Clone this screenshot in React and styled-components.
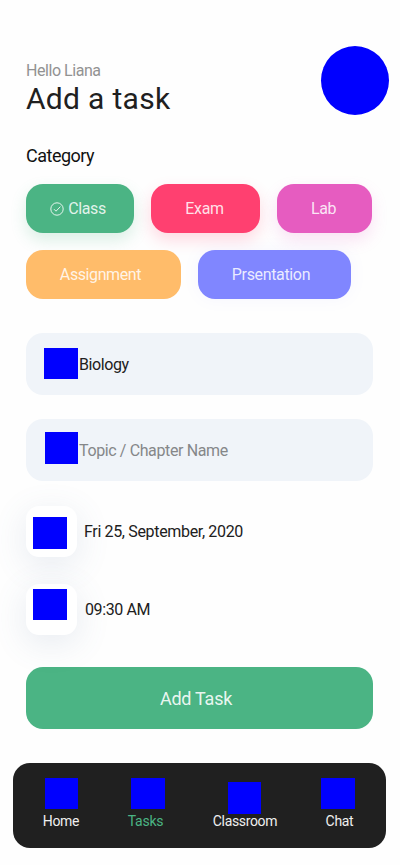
import React from "react";
import styled, { createGlobalStyle } from "styled-components";

const GlobalStyle = createGlobalStyle`
  * { box-sizing: border-box; }
  body {
    margin: 0;
    background: #fefefe;
    font-family: Roboto, "Liberation Sans", sans-serif;
    color: #202020;
  }
  h1, h2, p { margin: 0; font-weight: 400; }
  button { border: 0; padding: 0; font: inherit; }
`;

const Screen = styled.main`
  width: 400px;
  height: 865px;
  padding: 46px 0 0 26px;
  overflow: hidden;
`;

const Header = styled.header`
  display: flex;
  justify-content: space-between;
  width: 363px;
  height: 69px;
`;

const Heading = styled.div`
  padding-top: 16px;
`;

const Greeting = styled.p`
  font-size: 16px;
  line-height: 18px;
  letter-spacing: -0.45px;
  color: #929292;
`;

const Title = styled.h1`
  font-size: 30px;
  line-height: 38px;
  letter-spacing: 0.3px;
`;

const Avatar = styled.div`
  width: 68px;
  height: 69px;
  border-radius: 50%;
  background: #0000ff;
`;

const SectionTitle = styled.h2`
  margin-top: 30px;
  height: 39px;
  font-size: 18px;
  line-height: 22px;
  letter-spacing: -0.5px;
  color: #111;
`;

const Chips = styled.div`
  display: flex;
  flex-wrap: wrap;
  gap: 17px;
  width: 348px;
`;

const Chip = styled.button`
  display: flex;
  align-items: center;
  justify-content: center;
  gap: 4px;
  width: ${(p) => p.$width}px;
  height: 49px;
  padding-right: ${(p) => p.$trim}px;
  border-radius: 17px;
  background: ${(p) => p.$color};
  box-shadow: ${(p) => p.$shadow};
  color: rgba(255, 255, 255, 0.85);
  font-size: 16px;
  letter-spacing: ${(p) => p.$spacing}px;
`;

const Fields = styled.div`
  display: flex;
  flex-direction: column;
  gap: 24px;
  margin-top: 34px;
`;

const Field = styled.div`
  display: flex;
  align-items: flex-start;
  width: 347px;
  height: 62px;
  padding-left: ${(p) => p.$inset}px;
  border-radius: 17px;
  background: #f0f4f9;
`;

const Square = styled.span`
  flex: none;
  width: ${(p) => p.$width || 34}px;
  height: ${(p) => p.$height || 31}px;
  margin-top: ${(p) => p.$top || 0}px;
  background: #0000ff;
`;

const FieldText = styled.span`
  margin-left: 1px;
  line-height: 64px;
  font-size: 16px;
  letter-spacing: ${(p) => p.$spacing}px;
  color: ${(p) => p.$color};
`;

const Schedule = styled.div`
  display: flex;
  flex-direction: column;
  gap: 27px;
  margin-top: 25px;
`;

const ScheduleRow = styled.div`
  display: flex;
  height: 51px;
`;

const Tile = styled.div`
  display: flex;
  align-items: flex-start;
  width: 51px;
  height: 51px;
  padding-left: 7px;
  border-radius: 13px;
  background: #fff;
  box-shadow: 0 8px 34px rgba(85, 112, 155, 0.14);
`;

const ScheduleText = styled.span`
  margin-left: ${(p) => p.$left}px;
  line-height: 52px;
  font-size: 16px;
  letter-spacing: ${(p) => p.$spacing}px;
  color: #202020;
`;

const Submit = styled.button`
  display: block;
  width: 347px;
  height: 62px;
  margin-top: 32px;
  padding-right: 7px;
  border-radius: 17px;
  background: #4bb484;
  color: rgba(255, 255, 255, 0.9);
  font-size: 18px;
  letter-spacing: -0.25px;
`;

const NavBar = styled.nav`
  display: grid;
  grid-template-columns: 84px 84px 115px 73px;
  width: 373px;
  height: 85px;
  margin: 34px 0 0 -13px;
  padding-left: 6px;
  border-radius: 17px;
  background: #202020;
`;

const NavItem = styled.a`
  display: flex;
  flex-direction: column;
  align-items: center;
  color: ${(p) => (p.$active ? "#4bb484" : "#efefef")};
`;

const NavIcon = styled.span`
  display: flex;
  flex-direction: column;
  align-items: center;
  height: 50px;
  padding-left: ${(p) => p.$left}px;
  padding-right: ${(p) => p.$right}px;
`;

const NavLabel = styled.span`
  padding-left: ${(p) => p.$shift}px;
  font-size: 14px;
  line-height: 16px;
  letter-spacing: ${(p) => p.$spacing}px;
`;

const CheckIcon = () => (
  <svg width="14" height="14" viewBox="0 0 14 14" fill="none" stroke="currentColor" strokeWidth="1">
    <circle cx="7" cy="7" r="6.2" />
    <path d="M4 7.2l2 2L10.4 4.6" />
  </svg>
);

const chips = [
  { label: "Class", width: 108, trim: 4, color: "#4bb484", shadow: "0 7px 16px rgba(75,180,132,.2)", spacing: -0.4, checked: true },
  { label: "Exam", width: 109, trim: 2, color: "#ff4070", shadow: "0 7px 16px rgba(255,64,112,.2)", spacing: -0.3 },
  { label: "Lab", width: 95, trim: 2, color: "#e65cc0", shadow: "0 7px 16px rgba(230,92,192,.18)", spacing: -0.4 },
  { label: "Assignment", width: 155, trim: 6, color: "#ffbc6a", shadow: "none", spacing: -0.4 },
  { label: "Prsentation", width: 153, trim: 7, color: "#8086ff", shadow: "0 0 16px rgba(128,134,255,.07)", spacing: -0.35 },
];

const navItems = [
  { label: "Home", width: 33, top: 15, height: 31, left: 1, labelShift: 0, spacing: -0.3 },
  { label: "Tasks", width: 34, top: 15, height: 31, left: 6, labelShift: 1, spacing: -0.2, active: true },
  { label: "Classroom", width: 33, top: 19, height: 32, left: 0, labelShift: 1, spacing: -0.35 },
  { label: "Chat", width: 34, top: 15, height: 31, right: 2, labelShift: 2, spacing: -0.3 },
];

export default function App() {
  return (
    <>
      <GlobalStyle />
      <Screen>
        <Header>
          <Heading>
            <Greeting>Hello Liana</Greeting>
            <Title>Add a task</Title>
          </Heading>
          <Avatar />
        </Header>
        <SectionTitle>Category</SectionTitle>
        <Chips>
          {chips.map((c) => (
            <Chip key={c.label} $width={c.width} $trim={c.trim} $color={c.color} $shadow={c.shadow} $spacing={c.spacing}>
              {c.checked && <CheckIcon />}
              {c.label}
            </Chip>
          ))}
        </Chips>
        <Fields>
          <Field $inset={18}>
            <Square $top={15} />
            <FieldText $color="#202020" $spacing={-0.4}>Biology</FieldText>
          </Field>
          <Field $inset={19}>
            <Square $width={33} $height={32} $top={13} />
            <FieldText $color="#858789" $spacing={-0.38}>Topic / Chapter Name</FieldText>
          </Field>
        </Fields>
        <Schedule>
          <ScheduleRow>
            <Tile><Square $top={11} $height={32} /></Tile>
            <ScheduleText $left={7} $spacing={-0.34}>Fri 25, September, 2020</ScheduleText>
          </ScheduleRow>
          <ScheduleRow>
            <Tile><Square $top={5} /></Tile>
            <ScheduleText $left={8} $spacing={-0.4}>09:30 AM</ScheduleText>
          </ScheduleRow>
        </Schedule>
        <Submit>Add Task</Submit>
        <NavBar>
          {navItems.map((n) => (
            <NavItem key={n.label} $active={n.active}>
              <NavIcon $left={n.left || 0} $right={n.right || 0}>
                <Square $width={n.width} $height={n.height} $top={n.top} />
              </NavIcon>
              <NavLabel $spacing={n.spacing} $shift={n.labelShift}>{n.label}</NavLabel>
            </NavItem>
          ))}
        </NavBar>
      </Screen>
    </>
  );
}
